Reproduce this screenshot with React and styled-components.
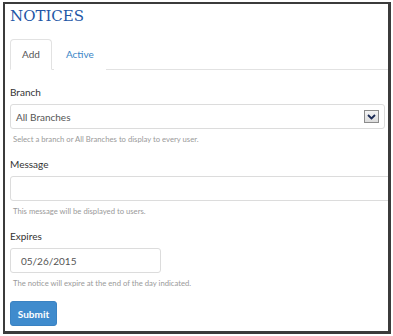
import React from "react";
import styled, { createGlobalStyle } from "styled-components";

const GlobalStyle = createGlobalStyle`
  html, body {
    margin: 0;
    padding: 0;
    background: #ffffff;
  }
  body {
    font-family: Lato, "Open Sans", Arial, sans-serif;
  }
`;

const Frame = styled.div`
  box-sizing: border-box;
  margin: 2px 0 0 3px;
  width: 388px;
  height: 332px;
  border-style: solid;
  border-color: #3b3b3b;
  border-width: 2px 3px 3px 2px;
  padding: 2px 0 0 5px;
  overflow: hidden;
  background: #ffffff;
`;

const Title = styled.h1`
  margin: 0;
  font-family: "DejaVu Serif", "Liberation Serif", serif;
  font-size: 15px;
  line-height: 20px;
  font-weight: normal;
  color: #2356a6;
`;

const TabBar = styled.div`
  display: flex;
  margin-top: 13px;
  border-bottom: 1px solid #e2e2e2;
`;

const Tab = styled.div`
  box-sizing: border-box;
  height: 31px;
  line-height: 29px;
  padding: 0 11px;
  margin-right: 2px;
  margin-bottom: -1px;
  font-size: 10px;
  border: 1px solid ${p => (p.$active ? "#e2e2e2" : "transparent")};
  border-bottom-color: ${p => (p.$active ? "#ffffff" : "transparent")};
  border-radius: 4px 4px 0 0;
  color: ${p => (p.$active ? "#555555" : "#3a85c6")};
  background: #ffffff;
`;

const Field = styled.div`
  display: flex;
  flex-direction: column;
  margin-top: ${p => p.$first ? "15px" : "12px"};
`;

const Label = styled.label`
  font-size: 10px;
  line-height: 14px;
  color: #333333;
  margin-bottom: 5px;
`;

const Control = styled.div`
  box-sizing: border-box;
  display: flex;
  align-items: center;
  justify-content: space-between;
  height: 25px;
  width: ${p => p.$width};
  padding: 0 ${p => p.$pad || "10px"};
  border: 1px solid #dcdcdc;
  border-radius: 3px;
  font-size: 10px;
  color: #555555;
  background: #ffffff;
`;

const DropButton = styled.span`
  box-sizing: border-box;
  display: flex;
  align-items: center;
  justify-content: center;
  width: 15px;
  height: 13px;
  border: 1px solid #8c8c8c;
  background: linear-gradient(#f4f4f4, #dcdcdc);
`;

const Help = styled.div`
  margin-top: 4px;
  padding-left: 3px;
  font-size: 7.7px;
  line-height: 12px;
  color: #9a9a9a;
`;

const SubmitButton = styled.button`
  box-sizing: border-box;
  margin-top: 12px;
  width: 47px;
  height: 25px;
  padding: 0;
  border: 1px solid #3a82c2;
  border-radius: 3px;
  background: #3f8bcd;
  color: #ffffff;
  font-family: Lato, "Open Sans", Arial, sans-serif;
  font-size: 10px;
  font-weight: bold;
  display: block;
`;

const Chevron = () => (
  <svg width="9" height="6" viewBox="0 0 9 6">
    <path d="M1 1 L4.5 4.5 L8 1" fill="none" stroke="#1a2a55" strokeWidth="1.8" />
  </svg>
);

export default function App() {
  return (
    <>
      <GlobalStyle />
      <Frame>
        <Title>NOTICES</Title>
        <TabBar>
          <Tab $active>Add</Tab>
          <Tab>Active</Tab>
        </TabBar>

        <Field $first>
          <Label>Branch</Label>
          <Control $width="375px" $pad="5px">
            <span>All Branches</span>
            <DropButton>
              <Chevron />
            </DropButton>
          </Control>
          <Help>Select a branch or All Branches to display to every user.</Help>
        </Field>

        <Field>
          <Label>Message</Label>
          <Control $width="400px" />
          <Help>This message will be displayed to users.</Help>
        </Field>

        <Field>
          <Label>Expires</Label>
          <Control $width="151px">05/26/2015</Control>
          <Help>The notice will expire at the end of the day indicated.</Help>
        </Field>

        <SubmitButton>Submit</SubmitButton>
      </Frame>
    </>
  );
}
